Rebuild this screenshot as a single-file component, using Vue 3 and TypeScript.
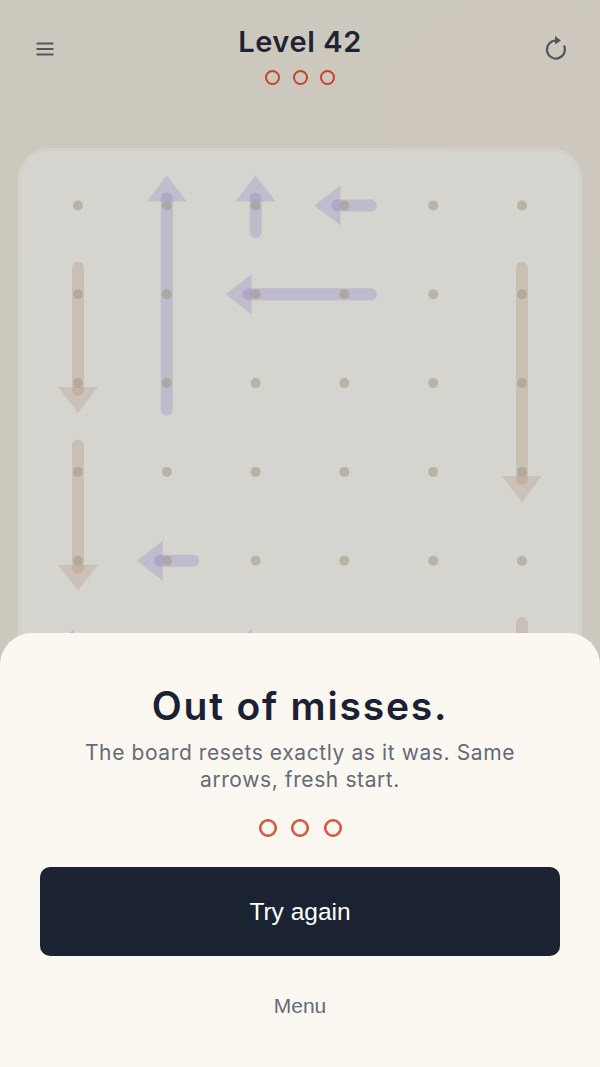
<script setup lang="ts">
type Dir = 'up' | 'down' | 'left'

interface Arrow {
  col: number
  row: number
  len: number
  dir: Dir
}

const pitch = 88.8
const origin = { x: 60, y: 57.5 }
const cells = [0, 1, 2, 3, 4, 5]

// col/row is the head cell, len counts the cells behind it
const arrows: Arrow[] = [
  { col: 1, row: 0, len: 2, dir: 'up' },
  { col: 2, row: 0, len: 0, dir: 'up' },
  { col: 3, row: 0, len: 0, dir: 'left' },
  { col: 2, row: 1, len: 1, dir: 'left' },
  { col: 0, row: 2, len: 1, dir: 'down' },
  { col: 0, row: 4, len: 1, dir: 'down' },
  { col: 5, row: 3, len: 2, dir: 'down' },
  { col: 1, row: 4, len: 0, dir: 'left' },
  { col: 5, row: 6, len: 1, dir: 'down' },
  { col: 0, row: 5, len: 2, dir: 'left' },
  { col: 2, row: 5, len: 1, dir: 'left' },
]

const px = (col: number) => origin.x + col * pitch
const py = (row: number) => origin.y + row * pitch

function shape(a: Arrow) {
  const x = px(a.col)
  const y = py(a.row)
  const tail = a.len * pitch + 26.5
  if (a.dir === 'up') {
    return {
      line: `M${x} ${y + tail}V${y - 7}`,
      head: `${x},${y - 30} ${x + 20},${y - 4} ${x - 20},${y - 4}`,
    }
  }
  if (a.dir === 'down') {
    return {
      line: `M${x} ${y - tail}V${y + 7}`,
      head: `${x},${y + 30} ${x + 20},${y + 4} ${x - 20},${y + 4}`,
    }
  }
  return {
    line: `M${x + tail} ${y}H${x - 7}`,
    head: `${x - 30},${y} ${x - 4},${y - 20} ${x - 4},${y + 20}`,
  }
}
</script>

<template>
  <div class="page">
    <header class="top">
      <button class="icon-btn" aria-label="Menu">
        <svg width="18" height="14" viewBox="0 0 18 14">
          <path d="M0.5 1.5H17.5M0.5 7H17.5M0.5 12.5H17.5" stroke="#55575f" stroke-width="2" fill="none" />
        </svg>
      </button>
      <div class="title-wrap">
        <h1 class="level">Level 42</h1>
        <div class="lives lives-small">
          <span v-for="n in 3" :key="n" class="life"></span>
        </div>
      </div>
      <button class="icon-btn" aria-label="Restart">
        <svg width="24" height="26" viewBox="0 0 24 26">
          <path d="M11 5.5A9 9 0 1 0 19 10.5" stroke="#55575f" stroke-width="2.2" fill="none" />
          <path d="M10 1L16 5.5L10 9.5Z" fill="#55575f" />
        </svg>
      </button>
    </header>

    <section class="board">
      <svg class="grid" width="564" height="564" viewBox="0 0 564 564">
        <g v-for="(a, i) in arrows" :key="i" :class="['arrow', a.dir]">
          <path class="shaft" :d="shape(a).line" />
          <polygon class="head" :points="shape(a).head" />
        </g>
        <template v-for="r in cells" :key="r">
          <circle v-for="c in cells" :key="c" class="dot" :cx="px(c)" :cy="py(r)" r="5" />
        </template>
      </svg>
    </section>

    <section class="sheet">
      <h2 class="heading">Out of misses.</h2>
      <p class="sub">The board resets exactly as it was. Same arrows, fresh start.</p>
      <div class="lives lives-big">
        <span v-for="n in 3" :key="n" class="life"></span>
      </div>
      <button class="retry">Try again</button>
      <button class="menu">Menu</button>
    </section>
  </div>
</template>

<style>
html,
body {
  margin: 0;
  background: #cdc9bf;
}
</style>

<style scoped>
.page {
  position: relative;
  width: 600px;
  height: 1067px;
  overflow: hidden;
  background: radial-gradient(circle at 85% 12%, #cec8be 0%, #ccc8be 40%, #cac8be 100%);
  font-family: Inter, "Liberation Sans", sans-serif;
}

.top {
  display: flex;
  justify-content: space-between;
  align-items: flex-start;
  height: 148px;
  box-sizing: border-box;
  padding: 24px 32px 0 36px;
}

.icon-btn {
  margin-top: 18px;
  padding: 0;
  background: none;
  border: none;
  line-height: 0;
}

.icon-btn:last-child {
  margin-top: 11px;
  margin-right: -1px;
}

.title-wrap {
  display: flex;
  flex-direction: column;
  align-items: center;
  gap: 10px;
  margin-left: 1px;
}

.level {
  margin: 0;
  font-size: 29px;
  line-height: 36px;
  font-weight: 600;
  letter-spacing: 0.6px;
  color: #1f2433;
}

.lives {
  display: flex;
  justify-content: center;
}

.life {
  display: block;
  box-sizing: border-box;
  border-radius: 50%;
  border-style: solid;
}

.lives-small {
  gap: 12.5px;
}

.lives-small .life {
  width: 15px;
  height: 15px;
  border-width: 2px;
  border-color: #c8402e;
}

.lives-big {
  gap: 14.5px;
  margin-top: 26px;
}

.lives-big .life {
  width: 18px;
  height: 18px;
  border-width: 2px;
  border-color: #dc4b32;
  box-shadow: inset 0 0 0 0.6px #dc4b32;
}

.board {
  margin: 0 18px;
  width: 564px;
  height: 564px;
  border-radius: 32px;
  background: #d5d4cf;
  box-shadow: inset 0 0 0 3px #d2d1ca;
}

.grid {
  display: block;
}

.shaft {
  fill: none;
  stroke-width: 12;
  stroke-linecap: round;
}

.down .shaft {
  stroke: rgba(175, 135, 110, 0.27);
}

.down .head {
  fill: rgba(175, 135, 115, 0.24);
}

.up .shaft {
  stroke: rgba(110, 110, 190, 0.23);
}

.up .head {
  fill: rgba(110, 110, 195, 0.21);
}

.left .shaft {
  stroke: rgba(120, 100, 195, 0.23);
}

.left .head {
  fill: rgba(120, 100, 195, 0.21);
}

.dot {
  fill: rgba(158, 153, 132, 0.55);
}

.sheet {
  position: absolute;
  left: 0;
  right: 0;
  bottom: 0;
  height: 434px;
  box-sizing: border-box;
  padding: 48px 40px 0;
  display: flex;
  flex-direction: column;
  align-items: center;
  border-radius: 32px 32px 0 0;
  background: #fbf8f2;
}

.heading {
  margin: 0;
  font-size: 39px;
  line-height: 50px;
  font-weight: 600;
  letter-spacing: 1.8px;
  color: #1b2133;
}

.sub {
  margin: 8px 0 0;
  width: 470px;
  text-align: center;
  font-size: 21px;
  line-height: 27px;
  letter-spacing: 0.6px;
  color: #666a75;
}

.retry {
  margin-top: 30px;
  width: 520px;
  height: 89px;
  border: none;
  border-radius: 10px;
  background: #1b2333;
  color: #fff;
  font-family: "Liberation Sans", sans-serif;
  font-size: 24.5px;
}

.menu {
  margin-top: 34px;
  padding: 0;
  background: none;
  border: none;
  color: #666a75;
  font-family: "Liberation Sans", sans-serif;
  font-size: 21px;
  line-height: 32px;
}
</style>
